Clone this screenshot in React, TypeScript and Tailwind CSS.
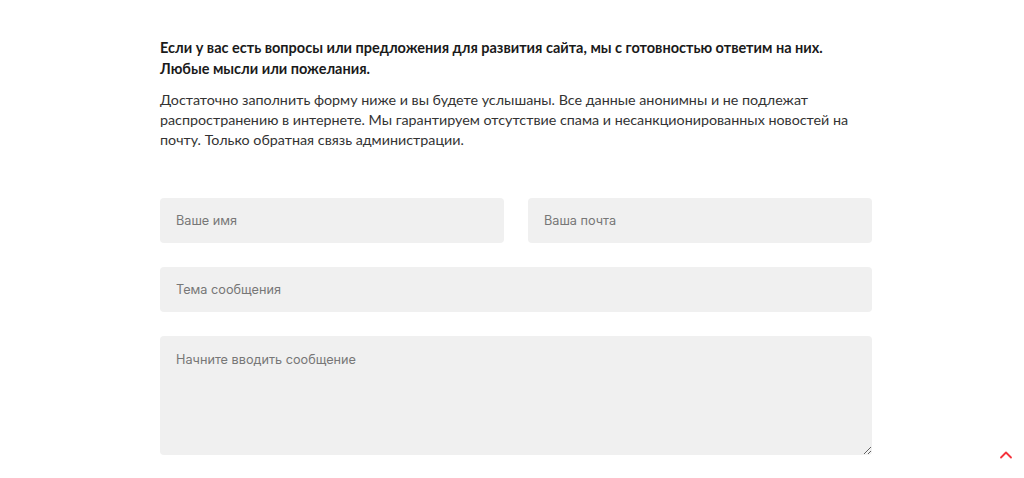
import { ChevronUp } from "lucide-react";

const inputCls =
  "w-full h-[45px] rounded-[4px] bg-[#f0f0f0] px-4 text-[12.7px] text-[#333] placeholder:text-[#777] outline-none";

export default function App() {
  return (
    <div className="w-[1024px] h-[478px] bg-white relative overflow-hidden" style={{ fontFamily: "Lato, sans-serif" }}>
      <div className="w-[712px] ml-[160px] pt-[37px]">
        <p className="text-[14.5px] leading-[21px] font-bold text-[#1a1a1a]">
          Если у вас есть вопросы или предложения для развития сайта, мы с готовностью ответим на них.
          <br />
          Любые мысли или пожелания.
        </p>
        <p className="mt-[11px] text-[14.3px] leading-[20px] text-[#333]">
          Достаточно заполнить форму ниже и вы будете услышаны. Все данные анонимны и не подлежат
          <br />
          распространению в интернете. Мы гарантируем отсутствие спама и несанкционированных новостей на
          <br />
          почту. Только обратная связь администрации.
        </p>
        <form className="mt-[48px] flex flex-col gap-6" style={{ fontFamily: "Inter, sans-serif" }}>
          <div className="grid grid-cols-2 gap-6">
            <input className={inputCls} placeholder="Ваше имя" />
            <input className={inputCls} placeholder="Ваша почта" />
          </div>
          <input className={inputCls} placeholder="Тема сообщения" />
          <textarea
            className="w-full h-[119px] rounded-[4px] bg-[#f0f0f0] px-4 pt-[14px] text-[12.7px] text-[#333] placeholder:text-[#777] outline-none"
            placeholder="Начните вводить сообщение"
          />
        </form>
      </div>
      <button className="absolute left-[996px] top-[445px] text-[#f5333c]">
        <ChevronUp size={20} strokeWidth={2.2} />
      </button>
    </div>
  );
}
